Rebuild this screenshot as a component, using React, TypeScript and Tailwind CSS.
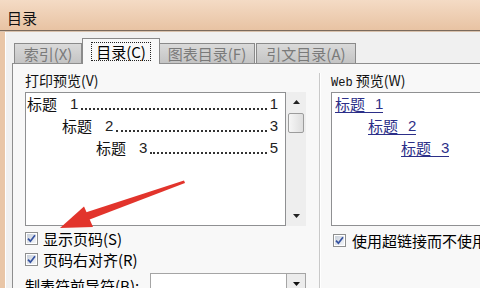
import React from "react";

function Check() {
  return (
    <div className="w-[13px] h-[13px] shrink-0 border border-[#8e8f8f] bg-white p-px">
      <div className="w-full h-full bg-gradient-to-br from-[#c9d0da] to-[#f4f6f9] flex items-center justify-center">
        <svg width="9" height="9" viewBox="0 0 9 9">
          <path d="M1 4.6 L3.4 7.2 L8 1.2" stroke="#3552a0" strokeWidth="1.7" fill="none" />
        </svg>
      </div>
    </div>
  );
}

function TocRow({ indent, num, page }: { indent: string; num: string; page: string }) {
  return (
    <div className={`h-[22px] flex items-center pr-[7px] ${indent}`}>
      <span className="text-[15px] leading-[18px] text-[#111]">标题</span>
      <span className="ml-[13px] text-[15px] leading-[18px] text-[#222] font-['Liberation_Sans',sans-serif]">{num}</span>
      <span className="flex-1 mx-[3px] self-end mb-[5px] border-b-2 border-dotted border-[#333]"></span>
      <span className="text-[15px] leading-[18px] text-[#222] font-['Liberation_Sans',sans-serif]">{page}</span>
    </div>
  );
}

function WebRow({ indent, num }: { indent: string; num: string }) {
  return (
    <div className={`h-[22px] flex items-center ${indent}`}>
      <span className="inline-flex items-end border-b border-[#2c2f88] text-[15px] leading-[17px] text-[#2c2f88]">
        标题<span className="ml-[10px] font-['Liberation_Sans',sans-serif]">{num}</span>
      </span>
    </div>
  );
}

export default function App() {
  return (
    <div className="w-[480px] h-[288px] overflow-hidden relative bg-[#f0f0f0] font-['Noto_Sans_CJK_SC',sans-serif] text-black">
      {/* title bar */}
      <div className="h-[30px] bg-gradient-to-b from-[#f4dbc5] to-[#e8c3a3] pl-[7px] pt-[5px]">
        <span className="text-[15px] leading-[18px] text-[#111]">目录</span>
      </div>
      <div className="h-px bg-[#7b6a5c]" />
      <div className="h-px bg-[#d9c2ad]" />
      <div className="flex h-[256px]">
        <div className="w-[5px] shrink-0 bg-[#e9c6a7]" />
        <div className="w-px shrink-0 bg-white" />
        <div className="flex-1 min-w-0 flex flex-col pl-[6px] pt-[6px]">
          {/* tabs */}
          <div className="h-[25px] flex items-end pl-[2px] text-[15px] leading-[17px] whitespace-nowrap">
            <div className="w-[68px] shrink-0 h-[20px] border border-b-0 border-[#8a8a8a] bg-gradient-to-b from-[#dadada] to-[#c4c4c4] text-[#7a7a7a] flex items-center justify-center">
              索引(X)
            </div>
            <div className="w-[78px] shrink-0 h-[26px] -mb-px relative z-10 border border-b-0 border-[#8a8a8a] bg-[#f8f8f8] flex items-center justify-center">
              <span className="border border-dotted border-[#222] px-[4px] h-[19px] flex items-center">目录(C)</span>
            </div>
            <div className="w-[95px] shrink-0 h-[20px] border border-b-0 border-l-0 border-[#8a8a8a] bg-gradient-to-b from-[#dadada] to-[#c4c4c4] text-[#7a7a7a] flex items-center justify-center">
              图表目录(F)
            </div>
            <div className="w-[100px] shrink-0 h-[20px] ml-px border border-b-0 border-[#8a8a8a] bg-gradient-to-b from-[#dadada] to-[#c4c4c4] text-[#7a7a7a] flex items-center justify-center">
              引文目录(A)
            </div>
          </div>
          {/* panel */}
          <div className="flex-1 border-t border-l border-[#8e8e8e] bg-[#f8f8f8] pl-[12px] flex">
            {/* left column */}
            <div className="w-[281px] shrink-0 flex flex-col">
              <div className="h-[28px] pt-[8px] text-[14px] leading-[16px] text-[#111]">打印预览(V)</div>
              <div className="h-[134px] flex">
                <div className="flex-1 border border-[#8f9092] bg-white">
                  <TocRow indent="pl-[1px]" num="1" page="1" />
                  <TocRow indent="pl-[36px]" num="2" page="3" />
                  <TocRow indent="pl-[70px]" num="3" page="5" />
                </div>
                <div className="w-[20px] shrink-0 bg-[#eeeeee] flex flex-col">
                  <div className="h-[20px] flex items-center justify-center">
                    <svg width="7" height="4" viewBox="0 0 7 4"><path d="M0 4 L3.5 0 L7 4 Z" fill="#222" /></svg>
                  </div>
                  <div className="h-[20px] mx-[2px] mt-px rounded-[2px] border border-[#9c9c9c] bg-gradient-to-r from-[#f6f6f6] to-[#dedede]" />
                  <div className="flex-1" />
                  <div className="h-[20px] flex items-center justify-center">
                    <svg width="7" height="4" viewBox="0 0 7 4"><path d="M0 0 L7 0 L3.5 4 Z" fill="#222" /></svg>
                  </div>
                </div>
              </div>
              <div className="mt-[6px] h-[13px] flex items-center text-[15px] leading-[17px]">
                <Check />
                <span className="ml-[5px]">显示页码(S)</span>
              </div>
              <div className="mt-[8px] h-[13px] flex items-center text-[15px] leading-[17px]">
                <Check />
                <span className="ml-[5px]">页码右对齐(R)</span>
              </div>
              <div className="mt-[7px] h-[22px] flex items-start text-[15px] leading-[17px]">
                <span className="w-[125px] shrink-0 pt-[4px] whitespace-nowrap">制表符前导符(B):</span>
                <div className="flex-1 h-[22px] border border-[#a5a5a5] bg-white flex justify-end">
                  <div className="w-[19px] h-full border-l border-[#a5a5a5] bg-[#ececec] flex items-center justify-center">
                    <svg width="7" height="4" viewBox="0 0 7 4"><path d="M0 0 L7 0 L3.5 4 Z" fill="#111" /></svg>
                  </div>
                </div>
              </div>
            </div>
            {/* divider */}
            <div className="ml-[13px] mt-[9px] w-px shrink-0 bg-[#c9c9c9]" />
            <div className="w-px shrink-0 mt-[9px] bg-white" />
            {/* right column */}
            <div className="ml-[10px] w-[200px] shrink-0 flex flex-col">
              <div className="h-[28px] pt-[8px] text-[14px] leading-[16px] text-[#111] whitespace-nowrap">
                <span className="font-['Liberation_Mono',monospace] text-[12px]">Web</span> 预览(W)
              </div>
              <div className="h-[134px] border border-r-0 border-[#8f9092] bg-white">
                <WebRow indent="pl-[3px]" num="1" />
                <WebRow indent="pl-[36px]" num="2" />
                <WebRow indent="pl-[69px]" num="3" />
              </div>
              <div className="mt-[8px] h-[13px] pl-[2px] flex items-center text-[15px] leading-[17px] whitespace-nowrap">
                <Check />
                <span className="ml-[6px]">使用超链接而不使用页码(H)</span>
              </div>
            </div>
          </div>
        </div>
      </div>
      {/* red annotation arrow */}
      <svg className="absolute left-0 top-0 pointer-events-none" width="480" height="288" viewBox="0 0 480 288">
        <polygon points="184,180.5 185,183 87,220.5 84,213" fill="#e2342c" />
        <polygon points="60,228 84,206.5 93,227" fill="#e2342c" />
      </svg>
    </div>
  );
}
